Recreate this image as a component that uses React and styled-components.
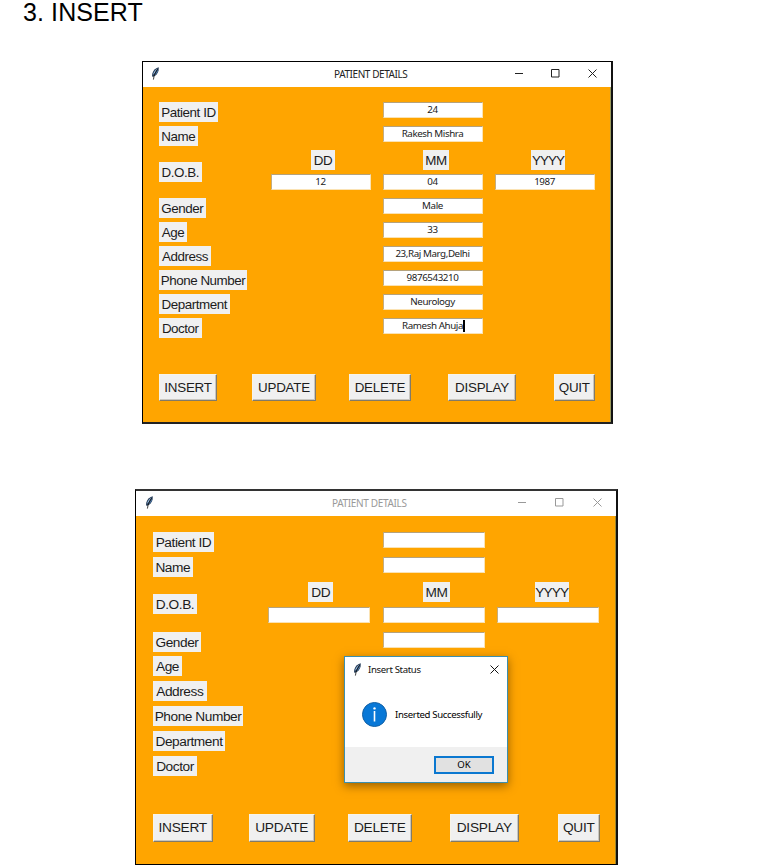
import React from "react";
import styled, { createGlobalStyle } from "styled-components";

const GlobalStyle = createGlobalStyle`
  * { box-sizing: border-box; }
  html, body { margin: 0; padding: 0; background: #fff; overflow: hidden; }
  body { font-family: "Liberation Sans", Arial, sans-serif; color: #000; }
  button, input { font: inherit; }
`;

const Page = styled.main`
  width: 765px;
  height: 866px;
  display: flex;
  flex-direction: column;
  overflow: hidden;
`;

const Heading = styled.h1`
  height: 61px;
  flex: none;
  margin: 0;
  padding-left: 23px;
  font-size: 25px;
  font-weight: 400;
  line-height: 25px;
  letter-spacing: 0.1px;
`;

const Window = styled.section`
  flex: none;
  position: relative;
  display: flex;
  flex-direction: column;
  width: ${(p) => p.$w}px;
  height: ${(p) => p.$h}px;
  margin: ${(p) => p.$margin};
  border: 1.5px solid #000;
  border-width: ${(p) => p.$border};
  border-color: ${(p) => p.$edge};
  background: #ffa500;
  box-shadow: inset -1px 0 0 ${(p) => p.$rim};
`;

const TitleBar = styled.header`
  display: grid;
  grid-template-columns: ${(p) => p.$cols};
  align-items: center;
  flex: none;
  height: ${(p) => p.$h}px;
  padding-bottom: ${(p) => p.$lift || 0}px;
  background: #fff;
  color: ${(p) => p.$color};
`;

const Title = styled.span`
  font-family: "Noto Sans", sans-serif;
  font-size: 10px;
  line-height: 14px;
  letter-spacing: ${(p) => p.$track}px;
  white-space: nowrap;
`;

const Form = styled.div`
  display: grid;
  grid-template-columns: repeat(4, ${(p) => p.$col}px);
  grid-auto-rows: ${(p) => p.$row}px;
  flex: none;
  margin: ${(p) => p.$margin};
`;

const Label = styled.label`
  grid-column: ${(p) => p.$c};
  grid-row: ${(p) => p.$r};
  align-self: ${(p) => (p.$span ? "center" : "start")};
  justify-self: ${(p) => (p.$center ? "center" : "start")};
  width: ${(p) => p.$w}px;
  height: ${(p) => p.$h}px;
  margin-bottom: ${(p) => (p.$span ? 4.5 : 0)}px;
  margin-right: ${(p) => p.$inset || 0}px;
  background: #f0f0f0;
  color: #1c1c1c;
  font-size: ${(p) => p.$size}px;
  line-height: ${(p) => p.$h + 1.5}px;
  letter-spacing: ${(p) => p.$track}px;
  text-align: center;
  white-space: nowrap;
`;

const Field = styled.div`
  grid-column: ${(p) => p.$c};
  grid-row: ${(p) => p.$r};
  display: flex;
  align-items: center;
  justify-content: center;
  width: ${(p) => p.$w}px;
  height: 16px;
  padding-right: 1px;
  border: 1px solid #fbe3b4;
  border-top-color: #b5a27c;
  border-left-color: #c4ad80;
  background: #fff;
  color: #222;
  font-family: "Noto Sans", sans-serif;
  font-size: 9.8px;
  line-height: 14px;
  letter-spacing: -0.42px;
  white-space: nowrap;
`;

const Caret = styled.span`
  width: 2px;
  height: 12px;
  margin-right: -2px;
  background: #000;
`;

const Actions = styled.div`
  display: grid;
  grid-template-columns: ${(p) => p.$cols};
  flex: none;
  margin: ${(p) => p.$margin};
`;

const Action = styled.button`
  width: ${(p) => p.$w}px;
  height: ${(p) => p.$h}px;
  padding: 0;
  border: 1px solid;
  border-color: #f8f4e8 #827a68 #827a68 #f8f4e8;
  box-shadow: inset -1px -1px 0 #c8c6c0;
  background: #f0f0f0;
  color: #1c1c1c;
  font-size: ${(p) => p.$size}px;
  line-height: 20px;
  letter-spacing: -0.25px;
  text-align: center;
  white-space: nowrap;
`;

const Dialog = styled.div`
  position: absolute;
  left: 208px;
  top: 165px;
  width: 164px;
  height: 127px;
  display: flex;
  flex-direction: column;
  border: 1px solid #3c8fae;
  background: #fff;
  box-shadow: 0 3px 9px rgba(70, 40, 0, 0.55);
  font-family: "Noto Sans", sans-serif;
  font-size: 9.6px;
  letter-spacing: -0.35px;
`;

const DialogBody = styled.div`
  display: flex;
  align-items: center;
  flex: 1;
  gap: 8px;
  padding: 0 0 0 17px;
  margin-top: -1px;
  white-space: nowrap;
`;

const DialogFooter = styled.footer`
  display: flex;
  justify-content: flex-end;
  align-items: center;
  height: 35px;
  padding-right: 13px;
  background: #f0f0f0;
`;

const OkButton = styled.button`
  width: 60px;
  height: 18px;
  padding: 0;
  border: 2px solid #0b78d0;
  background: #e1e1e1;
  color: #000;
  line-height: 12px;
`;

const Icon = styled.svg`
  display: block;
  overflow: visible;
`;

function Feather() {
  return (
    <Icon width="9" height="13" viewBox="0 0 9 13">
      <path d="M7.8.3C5 .8 2.4 3.2 1.3 6.4L1 9.4l1.4.4C5 8.8 7 6.4 7.6 3.6Z" fill="#263d59" />
      <path d="M6.5 1.6C4.2 3 2.6 5.2 2 7.8L3.2 6.8Z" fill="#9fc3e6" />
      <path d="M7.2 2.4 3.4 8.4C5.2 7.4 6.5 5.5 7 3.8Z" fill="#5d8fc4" />
      <path d="M6.6 2.2C4.6 4.9 3 8 2.4 12.6" fill="none" stroke="#111" strokeWidth=".8" />
    </Icon>
  );
}

function Minimize() {
  return (
    <Icon width="9" height="9" viewBox="0 0 9 9">
      <path d="M0 4.5h8" stroke="currentColor" fill="none" />
    </Icon>
  );
}

function Maximize() {
  return (
    <Icon width="9" height="9" viewBox="0 0 9 9">
      <path d="M.5 .5h7.5v7.5h-7.5Z" stroke="currentColor" fill="none" />
    </Icon>
  );
}

function Close() {
  return (
    <Icon width="9" height="9" viewBox="0 0 9 9">
      <path d="m.5 .5 8 8m0-8-8 8" stroke="currentColor" fill="none" />
    </Icon>
  );
}

function Info() {
  return (
    <Icon width="25" height="25" viewBox="0 0 25 25">
      <circle cx="12.5" cy="12.5" r="12" fill="#0878d7" stroke="#1260a5" />
      <circle cx="12.5" cy="6.4" r="1.2" fill="#fff" />
      <path d="M12.5 9v10.5" stroke="#fff" strokeWidth="1.6" />
    </Icon>
  );
}

const LABELS = [
  { text: "Patient ID", row: "1" },
  { text: "Name", row: "2" },
  { text: "D.O.B.", row: "3 / span 2", span: true },
  { text: "Gender", row: "5" },
  { text: "Age", row: "6" },
  { text: "Address", row: "7" },
  { text: "Phone Number", row: "8" },
  { text: "Department", row: "9" },
  { text: "Doctor", row: "10" },
];

const DATE_PARTS = ["DD", "MM", "YYYY"];
const ACTIONS = ["INSERT", "UPDATE", "DELETE", "DISPLAY", "QUIT"];

const FILLED = {
  labelWidths: [59, 38.5, 42.5, 46.5, 28, 52, 88, 70.5, 42.5],
  dateWidths: [24, 26, 34],
  dateInsets: [8, 6, 6],
  labelSize: 13.4,
  labelHeight: 19.5,
  track: -0.45,
  fieldWidth: 100,
  actionWidths: [58, 64, 62, 68, 41.5],
  actionHeight: 27,
  actionSize: 13.4,
  date: ["12", "04", "1987"],
  values: [
    [1, "24"],
    [2, "Rakesh Mishra"],
    [5, "Male"],
    [6, "33"],
    [7, "23,Raj Marg,Delhi"],
    [8, "9876543210"],
    [9, "Neurology"],
    [10, "Ramesh Ahuja", true],
  ],
};

const CLEARED = {
  labelWidths: [61, 39.5, 44, 48, 29, 53.5, 90, 72, 44],
  dateWidths: [24.5, 26.5, 34.5],
  dateInsets: [9, 7, 6],
  labelSize: 13.7,
  labelHeight: 20,
  track: -0.45,
  fieldWidth: 102,
  actionWidths: [59.5, 65.5, 63.5, 69.5, 42.5],
  actionHeight: 28,
  actionSize: 13.7,
  date: ["", "", ""],
  values: [[1, ""], [2, ""], [5, ""]],
};

function PatientForm({ spec, col, row, margin }) {
  return (
    <Form $col={col} $row={row} $margin={margin}>
      {LABELS.map((l, i) => (
        <Label
          key={l.text}
          $c="1"
          $r={l.row}
          $span={l.span}
          $w={spec.labelWidths[i]}
          $h={spec.labelHeight}
          $size={spec.labelSize}
          $track={spec.track}
        >
          {l.text}
        </Label>
      ))}
      {DATE_PARTS.map((part, i) => (
        <Label
          key={part}
          $c={i + 2}
          $r="3"
          $center
          $inset={spec.dateInsets[i]}
          $w={spec.dateWidths[i]}
          $h={spec.labelHeight}
          $size={spec.labelSize}
          $track={part === "YYYY" ? -0.9 : spec.track}
        >
          {part}
        </Label>
      ))}
      {spec.date.map((value, i) => (
        <Field key={i} $c={i + 2} $r="4" $w={spec.fieldWidth}>
          {value}
        </Field>
      ))}
      {spec.values.map(([r, value, focused]) => (
        <Field key={r} $c="3" $r={r} $w={spec.fieldWidth}>
          {value}
          {focused && <Caret />}
        </Field>
      ))}
    </Form>
  );
}

function ActionRow({ spec, cols, margin }) {
  return (
    <Actions $cols={cols} $margin={margin}>
      {ACTIONS.map((name, i) => (
        <Action key={name} $w={spec.actionWidths[i]} $h={spec.actionHeight} $size={spec.actionSize}>
          {name}
        </Action>
      ))}
    </Actions>
  );
}

export default function App() {
  return (
    <Page>
      <GlobalStyle />
      <Heading>3. INSERT</Heading>

      <Window $w={471} $h={363} $margin="0 0 0 142px" $border="1px 2px 2px 1px" $edge="#000 #111 #222 #000" $rim="#9c9a5c">
        <TitleBar $h={25} $lift={2} $color="#222" $cols="8px 183px 181px 36px 37px 10px">
          <span />
          <Feather />
          <Title $track={-0.42}>PATIENT DETAILS</Title>
          <Minimize />
          <Maximize />
          <Close />
        </TitleBar>
        <PatientForm spec={FILLED} col={112} row={24} margin="15px 0 0 16px" />
        <ActionRow spec={FILLED} cols="93px 97px 99px 105.5px 42px" margin="32px 0 0 16px" />
      </Window>

      <Window $w={483} $h={376} $margin="65px 0 0 135px" $border="2px 2px 1px 1px" $edge="#333 #111 #000 #000" $rim="#a08a30">
        <TitleBar $h={25} $lift={2} $color="#999" $cols="9px 187px 186px 37px 38px 10px">
          <span />
          <Feather />
          <Title $track={-0.34}>PATIENT DETAILS</Title>
          <Minimize />
          <Maximize />
          <Close />
        </TitleBar>
        <PatientForm spec={CLEARED} col={114.8} row={24.9} margin="16px 0 0 17px" />
        <ActionRow spec={CLEARED} cols="96px 99px 101.5px 108px 43px" margin="33px 0 0 17px" />
        <Dialog>
          <TitleBar $h={25} $color="#111" $cols="8px 15px 122px 10px">
            <span />
            <Feather />
            <span>Insert Status</span>
            <Close />
          </TitleBar>
          <DialogBody>
            <Info />
            <span>Inserted Successfully</span>
          </DialogBody>
          <DialogFooter>
            <OkButton>OK</OkButton>
          </DialogFooter>
        </Dialog>
      </Window>
    </Page>
  );
}
